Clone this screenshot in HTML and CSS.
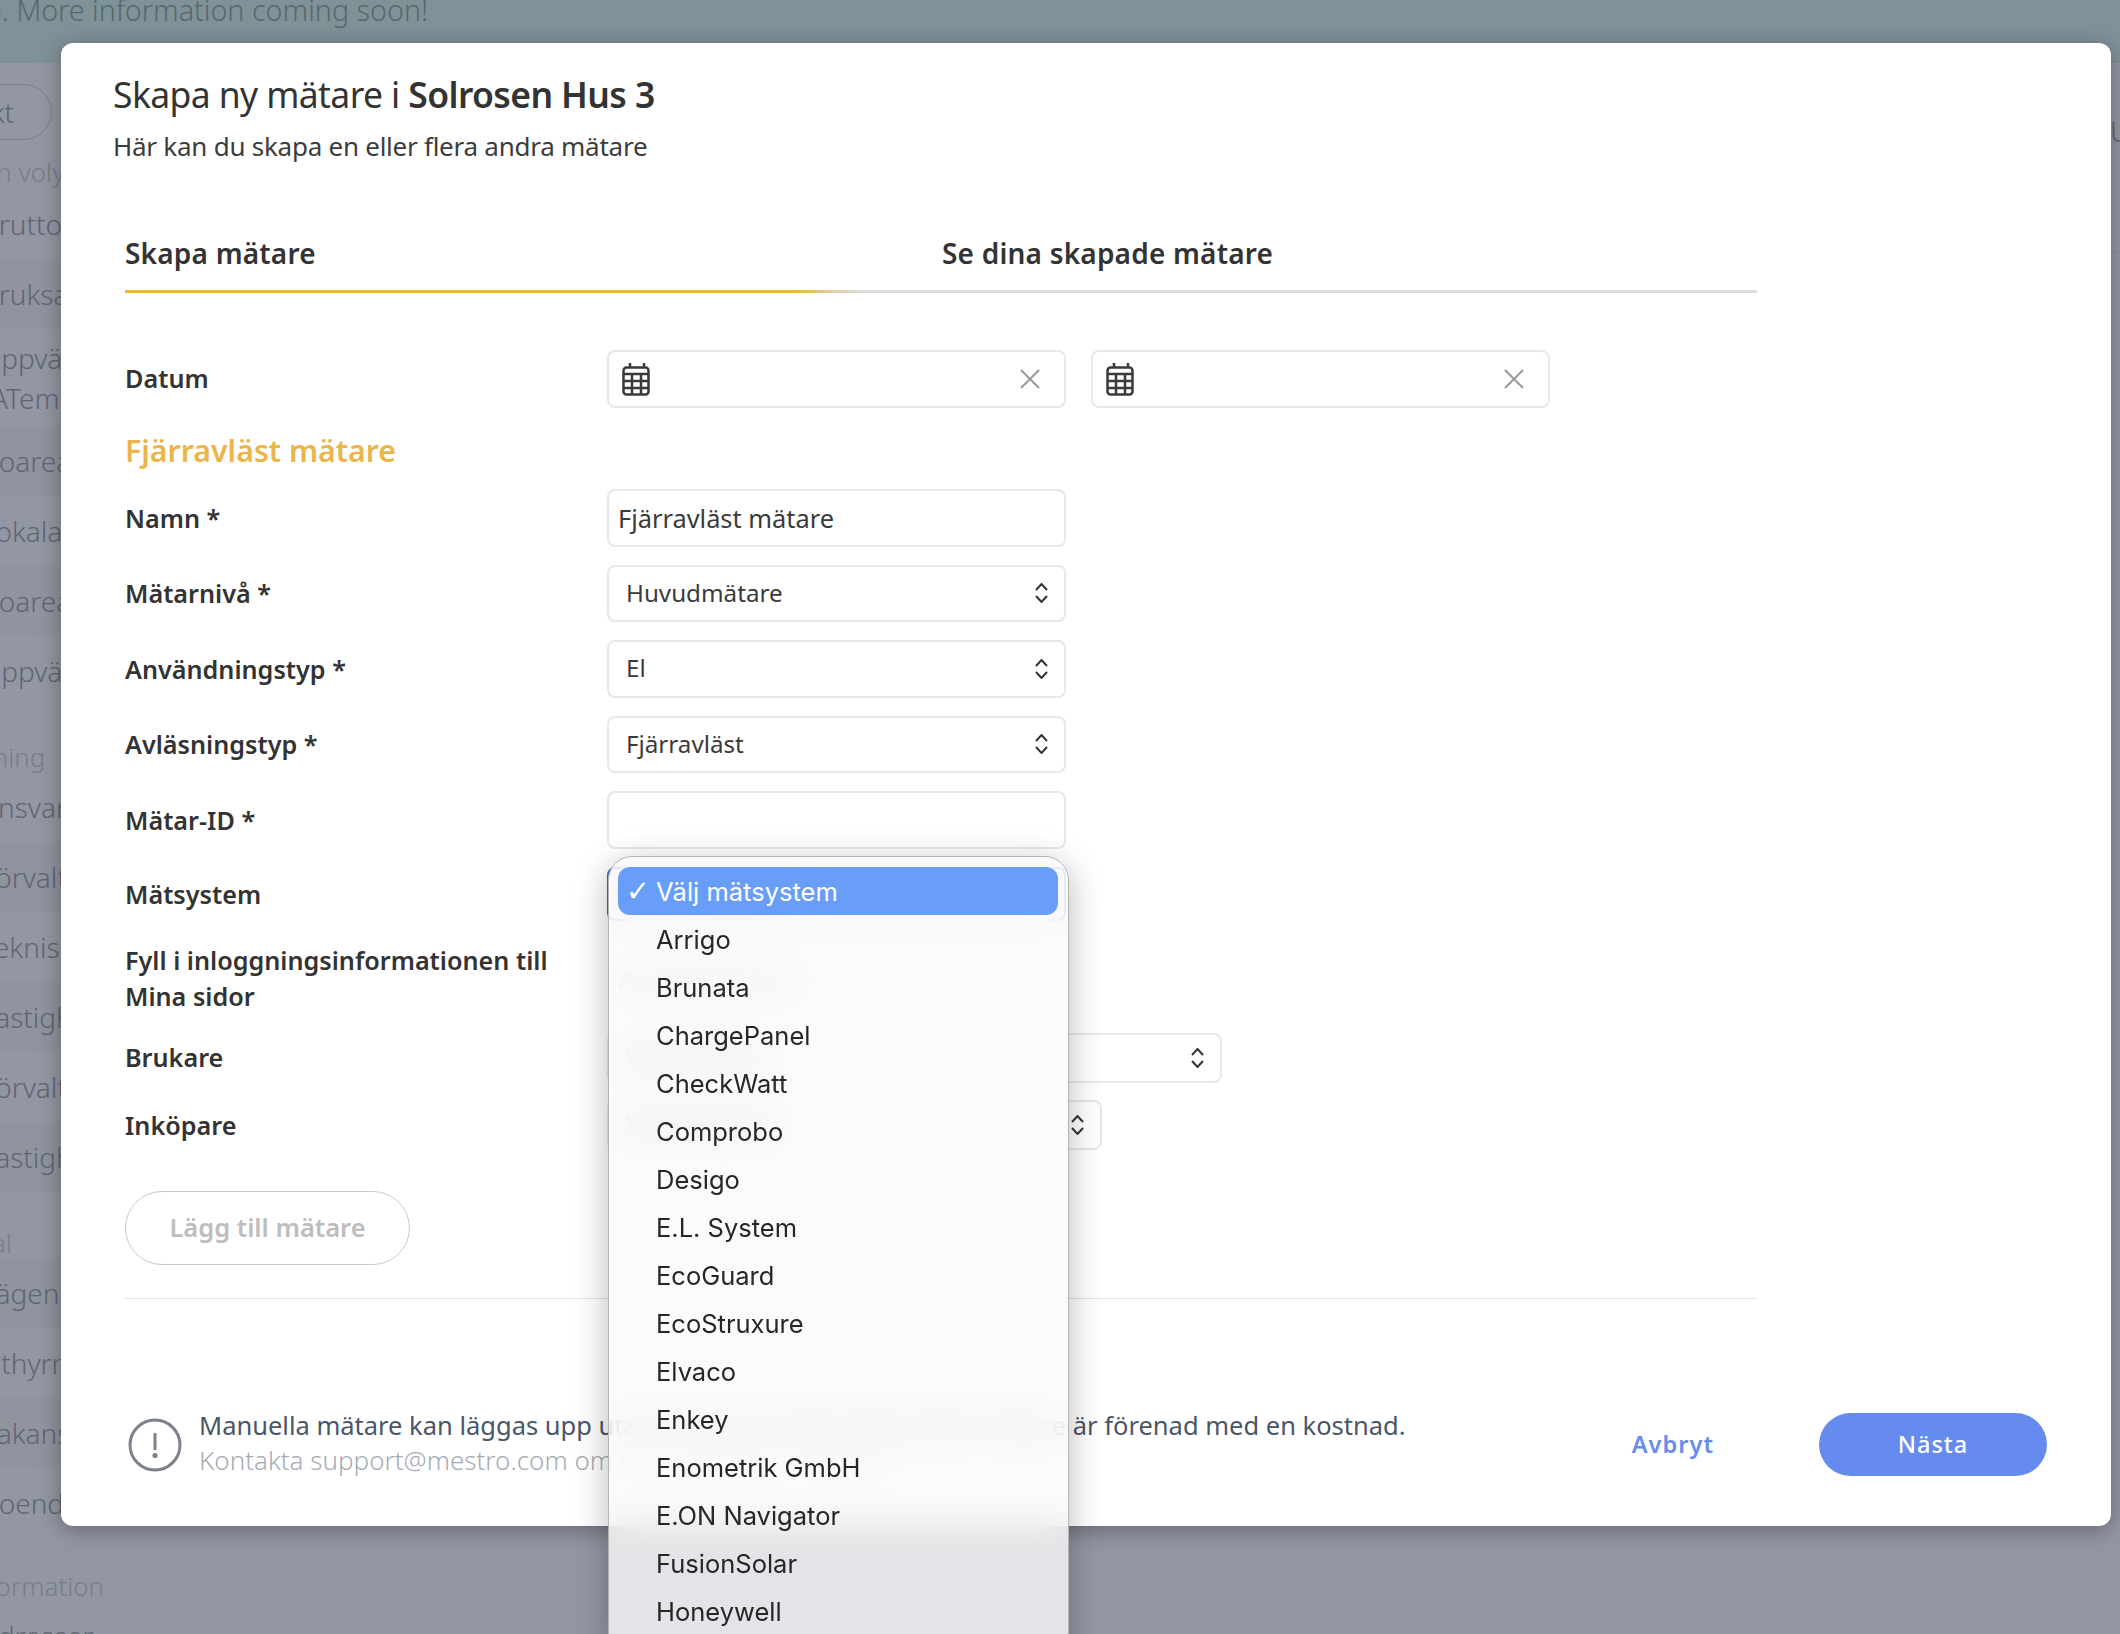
FILE: index.html
```html
<!DOCTYPE html>
<html lang="sv">
<head>
<meta charset="utf-8">
<title>Skapa ny mätare</title>
<link rel="stylesheet" href="styles.css">
</head>
<body>
<div class="page">
  <div class="banner"><span class="banner-text">p. More information coming soon!</span></div>
  <div class="behind">
    <div class="side">
      <div class="pill">Produkt</div>
      <div class="side-h h-area">Area och volym</div>
      <div class="side-row">Bruttoarea</div>
      <div class="side-row">Bruksarea</div>
      <div class="side-row tall"><span>Uppvärmd<br><span class="atemp">ATemp</span></span></div>
      <div class="side-row">Boarea</div>
      <div class="side-row">Lokalarea</div>
      <div class="side-row">Boarea</div>
      <div class="side-row">Uppvärmd</div>
      <div class="side-h h-forv">Förvaltning</div>
      <div class="side-row">Ansvarig</div>
      <div class="side-row">Förvaltare</div>
      <div class="side-row">Teknisk</div>
      <div class="side-row">Fastighet</div>
      <div class="side-row">Förvaltare</div>
      <div class="side-row">Fastighet</div>
      <div class="side-h h-pers">Personal</div>
      <div class="side-row">Lägenheter</div>
      <div class="side-row">Uthyrning</div>
      <div class="side-row">Vakans</div>
      <div class="side-row">Boende</div>
      <div class="side-h h-info">Information</div>
      <div class="side-row">Adresser</div>
    </div>
    <div class="side-right"><div class="side-right-row">Ut</div></div>
  </div>

  <section class="modal">
    <h1 class="title">Skapa ny mätare i <b>Solrosen Hus 3</b></h1>
    <p class="subtitle">Här kan du skapa en eller flera andra mätare</p>

    <div class="content">
      <div class="tabs">
        <div class="tab">Skapa mätare</div>
        <div class="tab">Se dina skapade mätare</div>
      </div>
      <div class="tabline"></div>

      <div class="row row-date">
        <div class="label label-up">Datum</div>
        <div class="dates">
          <div class="field date">
            <svg class="cal" viewBox="0 0 28 33"><rect x="1.5" y="4.5" width="25" height="27" rx="3"/><path d="M8 0v5M22 0v5M1.5 11h25M1.5 18h25M1.5 25h25M10 11v20M19 11v20"/></svg>
            <svg class="clear" viewBox="0 0 20 20"><path d="M1 1l18 18M19 1L1 19"/></svg>
          </div>
          <div class="field date">
            <svg class="cal" viewBox="0 0 28 33"><rect x="1.5" y="4.5" width="25" height="27" rx="3"/><path d="M8 0v5M22 0v5M1.5 11h25M1.5 18h25M1.5 25h25M10 11v20M19 11v20"/></svg>
            <svg class="clear" viewBox="0 0 20 20"><path d="M1 1l18 18M19 1L1 19"/></svg>
          </div>
        </div>
      </div>

      <h2 class="section">Fjärravläst mätare</h2>

      <div class="row">
        <div class="label">Namn *</div>
        <div class="field input">Fjärravläst mätare</div>
      </div>
      <div class="row">
        <div class="label">Mätarnivå *</div>
        <div class="field select"><span>Huvudmätare</span><svg class="updown" viewBox="0 0 13 20"><path d="M1 7l5.5-6L12 7M1 13l5.5 6L12 13"/></svg></div>
      </div>
      <div class="row">
        <div class="label">Användningstyp *</div>
        <div class="field select"><span>El</span><svg class="updown" viewBox="0 0 13 20"><path d="M1 7l5.5-6L12 7M1 13l5.5 6L12 13"/></svg></div>
      </div>
      <div class="row">
        <div class="label">Avläsningstyp *</div>
        <div class="field select"><span>Fjärravläst</span><svg class="updown" viewBox="0 0 13 20"><path d="M1 7l5.5-6L12 7M1 13l5.5 6L12 13"/></svg></div>
      </div>
      <div class="row">
        <div class="label">Mätar-ID *</div>
        <div class="field input"></div>
      </div>
      <div class="row row-system">
        <div class="label">Mätsystem</div>
        <div class="field select focused"><span>Välj mätsystem</span></div>
      </div>
      <div class="row row-login">
        <div class="label label-up">Fyll i inloggningsinformationen till Mina sidor</div>
        <div class="ghost">Användarnamn</div>
      </div>
      <div class="row row-short">
        <div class="label label-up">Brukare</div>
        <div class="field select wide"><span>Välj brukare</span><svg class="updown" viewBox="0 0 13 20"><path d="M1 7l5.5-6L12 7M1 13l5.5 6L12 13"/></svg></div>
      </div>
      <div class="row row-short">
        <div class="label">Inköpare</div>
        <div class="field select mid"><span>Välj inköpare</span><svg class="updown" viewBox="0 0 13 20"><path d="M1 7l5.5-6L12 7M1 13l5.5 6L12 13"/></svg></div>
      </div>

      <button class="add" type="button">Lägg till mätare</button>
      <div class="divider"></div>
    </div>

    <footer class="foot">
      <svg class="alert" viewBox="0 0 54 54"><circle cx="27" cy="27" r="25"/><path d="M27 15v17"/><circle class="dot" cx="27" cy="37.5" r="2.6"/></svg>
      <div class="note">
        <div class="note-main">Manuella mätare kan läggas upp utan kostnad medan fjärravläst mätare är förenad med en kostnad.</div>
        <div class="note-sub">Kontakta support@mestro.com om du har frågor om detta.</div>
      </div>
      <a class="cancel">Avbryt</a>
      <button class="next" type="button">Nästa</button>
    </footer>
  </section>

  <div class="menu">
    <div class="opt selected"><span class="tick">✓</span>Välj mätsystem</div>
    <div class="opt">Arrigo</div>
    <div class="opt">Brunata</div>
    <div class="opt">ChargePanel</div>
    <div class="opt">CheckWatt</div>
    <div class="opt">Comprobo</div>
    <div class="opt">Desigo</div>
    <div class="opt">E.L. System</div>
    <div class="opt">EcoGuard</div>
    <div class="opt">EcoStruxure</div>
    <div class="opt">Elvaco</div>
    <div class="opt">Enkey</div>
    <div class="opt">Enometrik GmbH</div>
    <div class="opt">E.ON Navigator</div>
    <div class="opt">FusionSolar</div>
    <div class="opt">Honeywell</div>
    <div class="opt">IMD</div>
  </div>
</div>
</body>
</html>
```

FILE: styles.css
```css
* { box-sizing: border-box; }
html, body { margin: 0; padding: 0; }
body { font-family: "Noto Sans", "Liberation Sans", sans-serif; color: #333; }

.page { position: relative; width: 2120px; height: 1634px; overflow: hidden; background: #9397a3; }

/* dimmed page behind the dialog */
.banner { height: 63px; background: #7f9298; overflow: hidden; color: #56696f; font-size: 28.7px; font-weight: 300; line-height: 20px; }
.banner-text { display: block; margin-left: -15.5px; white-space: nowrap; }

.behind { display: flex; justify-content: space-between; height: 1571px; color: #5f6573; font-size: 28px; font-weight: 300; }
.side { width: 600px; overflow: hidden; white-space: nowrap; padding-top: 21px; }
.pill { width: 200px; height: 56px; margin-left: -148px; padding-right: 37px; border: 1px solid #7b7f8c; border-radius: 28px; display: flex; align-items: center; justify-content: flex-end; }
.side-row { height: 70px; margin-left: -19px; display: flex; align-items: center; }
.side-row:nth-child(even) { box-shadow: 0 0 0 100px rgba(0,0,0,.018) inset; }
.side-row.tall { height: 97px; line-height: 40px; }
.atemp { margin-left: 10px; }
.side-h { display: flex; align-items: flex-end; line-height: 30px; font-size: 26px; color: #787d8a; }
.h-area { height: 49px; margin-left: -92px; padding-bottom: 2px; }
.h-forv { height: 66px; margin-left: -87px; }
.h-pers { height: 66px; margin-left: -91px; }
.h-info { height: 63px; margin-left: -36px; }
.side-right { width: 10px; overflow: hidden; padding-top: 50px; }
.side-right-row { height: 140px; line-height: 36px; border-bottom: 1px solid rgba(0,0,0,.05); }

/* dialog */
.modal { position: absolute; left: 61px; top: 43px; width: 2050px; height: 1483px; padding: 26px 64px 0 52px; background: #fff; border-radius: 12px; box-shadow: 0 4px 22px rgba(0,0,0,.32); }
.title { margin: 0; font-size: 35.5px; line-height: 50px; font-weight: 400; letter-spacing: -.6px; color: #333; }
.title b { font-weight: 600; }
.subtitle { margin: 7px 0 0; font-size: 26px; line-height: 40px; font-weight: 400; letter-spacing: -.25px; color: #3c3c3c; }

.content { width: 1632px; margin-left: 12px; }
.tabs { display: grid; grid-template-columns: 817px 1fr; margin-top: 67px; padding-bottom: 17px; }
.tab { font-size: 28px; line-height: 40px; font-weight: 600; letter-spacing: .2px; color: #333; }
.tabline { height: 3px; background: linear-gradient(90deg, #ebb54b 0, #ebb54b 41%, #dcdcdc 45%); }

.row { display: grid; grid-template-columns: 482px 1fr; align-items: center; height: 57.5px; margin-bottom: 18px; }
.row-date { height: 58px; margin: 57px 0 0; }
.row-system { height: 54px; margin-bottom: 22px; }
.row-login { height: 72px; }
.row-short { height: 50px; margin-bottom: 17px; }
.row-short:last-of-type { margin-bottom: 0; }
.label { font-size: 25.2px; line-height: 36px; font-weight: 600; color: #333; width: 430px; }
.label-up { margin-top: -2px; }
.dates { display: flex; gap: 25px; }
.section { margin: 23px 0 18px; font-size: 30.3px; line-height: 40px; font-weight: 600; color: #ebb54b; }

.field { width: 459px; height: 100%; border: 2px solid #e8e8e8; border-radius: 8px; background: #fff; display: flex; align-items: center; font-weight: 400; color: #3a3a3a; }
.date { height: 58px; padding: 0 24px 0 13px; justify-content: space-between; }
.input { padding-left: 9px; font-size: 25.4px; }
.select { padding: 0 16px 0 17px; justify-content: space-between; font-size: 24.2px; }
.select span { margin-top: -2px; }
.focused { border-color: #3b66d6; }
.wide { width: 615px; }
.mid { width: 495px; }
.ghost { padding-left: 12px; font-size: 25px; color: #777; }

.cal { width: 28px; height: 33px; fill: none; stroke: #3a3a3a; stroke-width: 2.5; }
.clear { width: 20px; height: 20px; fill: none; stroke: #9a9a9a; stroke-width: 2; }
.updown { width: 13px; height: 20px; fill: none; stroke: #333; stroke-width: 2; }

.add { display: block; width: 285px; height: 74px; margin-top: 41px; padding: 0; background: #fff; border: 1px solid #c9c9c9; border-radius: 37px; font: 600 25.5px/1 "Noto Sans", sans-serif; color: #bdbdbd; }
.divider { height: 1px; margin-top: 33px; background: #e3e3e3; }

.foot { display: flex; align-items: center; height: 72px; margin: 110px 0 0 15px; }
.alert { width: 54px; height: 54px; flex: none; fill: none; stroke: #7c818c; stroke-width: 3; }
.alert .dot { fill: #7c818c; stroke: none; }
.note { width: 1300px; margin: -4px 0 0 17px; line-height: 35px; white-space: nowrap; }
.note-main { color: #4a5568; font-size: 25.5px; }
.note-sub { color: #a6abb5; font-size: 26px; font-weight: 300; }
.cancel { margin: -2px 0 0 auto; font-size: 23.6px; font-weight: 600; letter-spacing: 1px; color: #668cee; }
.next { width: 228px; height: 63px; margin-left: 105px; background: #658bee; border: 0; border-radius: 32px; font: 500 23.5px/1 "Noto Sans", sans-serif; letter-spacing: 1px; color: #fff; }

/* open native select list */
.menu { position: absolute; left: 608px; top: 856px; width: 461px; height: 800px; padding: 10px 10px 10px 9px; background: rgba(250,250,250,.78); border: 1px solid #b4b4b4; border-radius: 24px; box-shadow: 0 8px 34px rgba(0,0,0,.28); backdrop-filter: blur(18px); font-family: Inter, "Liberation Sans", sans-serif; font-size: 25.5px; color: #262626; overflow: hidden; }
.opt { position: relative; height: 48px; padding-left: 38px; line-height: 49px; white-space: nowrap; }
.selected { background: #699ef8; border-radius: 12px; color: #fff; }
.tick { position: absolute; left: 8px; top: 0; font-family: "DejaVu Sans", sans-serif; font-size: 29px; font-weight: 700; }
```
